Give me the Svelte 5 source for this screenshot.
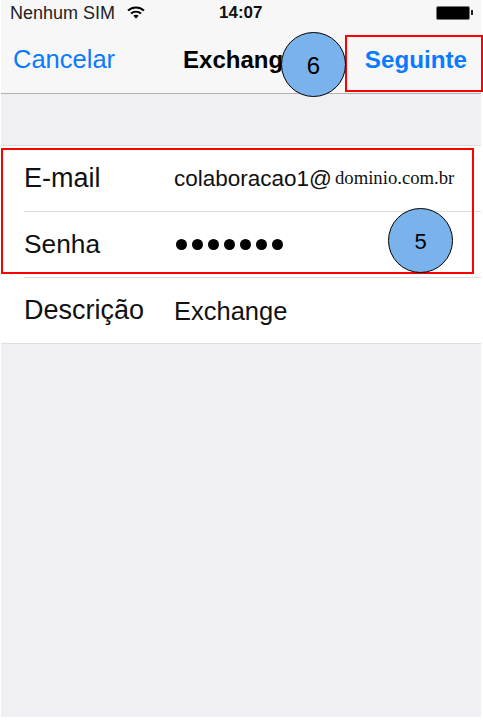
<script>
	const rows = [
		{ label: "E-mail", value: "colaboracao1@", extra: "dominio.com.br", small: true },
		{ label: "Senha", dots: 7, narrow: true },
		{ label: "Descrição", value: "Exchange" }
	];
</script>

<div class="page">
	<div class="screen">
		<header class="top">
			<div class="status">
				<span class="carrier">Nenhum SIM</span>
				<svg class="wifi" width="18" height="13" viewBox="0 0 18 13" aria-hidden="true">
					<path d="M1 4.6C5.6 .4 12.4 .4 17 4.6" fill="none" stroke="#000" stroke-width="2" />
					<path d="M4 7.6C6.9 5 11.1 5 14 7.6" fill="none" stroke="#000" stroke-width="2" />
					<path d="M6.3 9.8 9 12.6 11.7 9.8C10.1 8.5 7.9 8.5 6.3 9.8Z" fill="#000" />
				</svg>
				<span class="time">14:07</span>
				<span class="battery"><span class="cell"></span><span class="nub"></span></span>
			</div>
			<nav class="nav">
				<span class="link">Cancelar</span>
				<span class="title">Exchange</span>
				<span class="link strong">Seguinte</span>
			</nav>
		</header>

		<section class="form">
			{#each rows as row}
				<div class="row">
					<div class="row-in">
						<span class="label" class:narrow={row.narrow}>{row.label}</span>
						{#if row.dots}
							<span class="dots">
								{#each Array(row.dots) as _}<i></i>{/each}
							</span>
						{:else}
							<span class="value" class:small={row.small}>{row.value}</span>
							{#if row.extra}<span class="extra">{row.extra}</span>{/if}
						{/if}
					</div>
				</div>
			{/each}
		</section>

		<!-- annotations drawn over the screenshot -->
		<div class="box box-next"></div>
		<div class="box box-fields"></div>
		<div class="badge badge-6">6</div>
		<div class="badge badge-5">5</div>
	</div>
</div>

<style>
	:global(body) {
		margin: 0;
		background: #fff;
	}
	.page {
		width: 483px;
		height: 720px;
		padding: 0 2px 3px 1px;
		box-sizing: border-box;
		font-family: "Liberation Sans", Arial, sans-serif;
		color: #000;
		overflow: hidden;
	}
	.screen {
		position: relative;
		height: 100%;
		background: #efeff4;
	}
	.top {
		height: 93px;
		background: #f7f7f8;
		border-bottom: 1px solid #b2b2b2;
	}
	.status {
		display: flex;
		align-items: center;
		height: 26px;
		font-size: 18px;
		color: #222;
	}
	.carrier {
		margin-left: 9px;
		width: 117px;
	}
	.wifi {
		width: 18px;
		margin-top: -2px;
	}
	.time {
		margin-left: 74px;
		font-size: 17px;
		font-weight: bold;
		color: #111;
	}
	.battery {
		display: flex;
		align-items: center;
		margin-left: auto;
		margin-right: 8px;
		margin-top: -1px;
	}
	.cell {
		width: 34px;
		height: 14px;
		box-sizing: border-box;
		background: #000;
		border: 1px solid #777;
		border-radius: 2px;
	}
	.nub {
		width: 2px;
		height: 5px;
		background: #222;
		margin-left: 1px;
	}
	.nav {
		display: flex;
		align-items: center;
		height: 67px;
		font-size: 24px;
		padding: 0 14px 0 12px;
	}
	.link {
		color: #0a7aff;
		font-size: 25.5px;
	}
	.strong {
		font-size: 24.2px;
		font-weight: bold;
		margin-left: auto;
	}
	.title {
		margin-left: 68px;
		font-weight: bold;
	}
	.form {
		margin-top: 51px;
		background: #fff;
		border-top: 1px solid #dfdfe2;
	}
	.row-in {
		display: flex;
		align-items: center;
		height: 65px;
		margin-left: 23px;
		border-bottom: 1px solid #dfdfe2;
		font-size: 27px;
		color: #111;
	}
	.row:last-child {
		border-bottom: 1px solid #dfdfe2;
	}
	.row:last-child .row-in {
		border-bottom: 0;
	}
	.label {
		width: 150px;
		flex: none;
	}
	.label.narrow {
		font-size: 26.3px;
	}
	.value {
		font-size: 25.5px;
		padding-top: 1px;
	}
	.value.small {
		font-size: 22.5px;
		padding-top: 0;
	}
	.extra {
		font-family: "Liberation Serif", "Times New Roman", serif;
		font-size: 18.7px;
		margin-left: 3px;
		margin-top: -2px;
	}
	.dots {
		display: flex;
		gap: 5px;
		margin-left: 2px;
	}
	.dots i {
		display: block;
		width: 11px;
		height: 11px;
		border-radius: 50%;
		background: #000;
	}
	.box {
		position: absolute;
		box-sizing: border-box;
		border: 2px solid #f00;
	}
	.box-next {
		left: 344px;
		top: 35px;
		width: 138px;
		height: 57px;
	}
	.box-fields {
		left: 0;
		top: 148px;
		width: 473px;
		height: 126px;
	}
	.badge {
		position: absolute;
		width: 65px;
		height: 65px;
		padding-top: 3px;
		box-sizing: border-box;
		border: 1px solid #000;
		border-radius: 50%;
		background: #7ab2ec;
		display: flex;
		align-items: center;
		justify-content: center;
		font-size: 24px;
		color: #000;
	}
	.badge-6 {
		left: 280px;
		top: 32px;
	}
	.badge-5 {
		left: 387px;
		top: 208px;
		font-size: 22px;
	}
</style>
